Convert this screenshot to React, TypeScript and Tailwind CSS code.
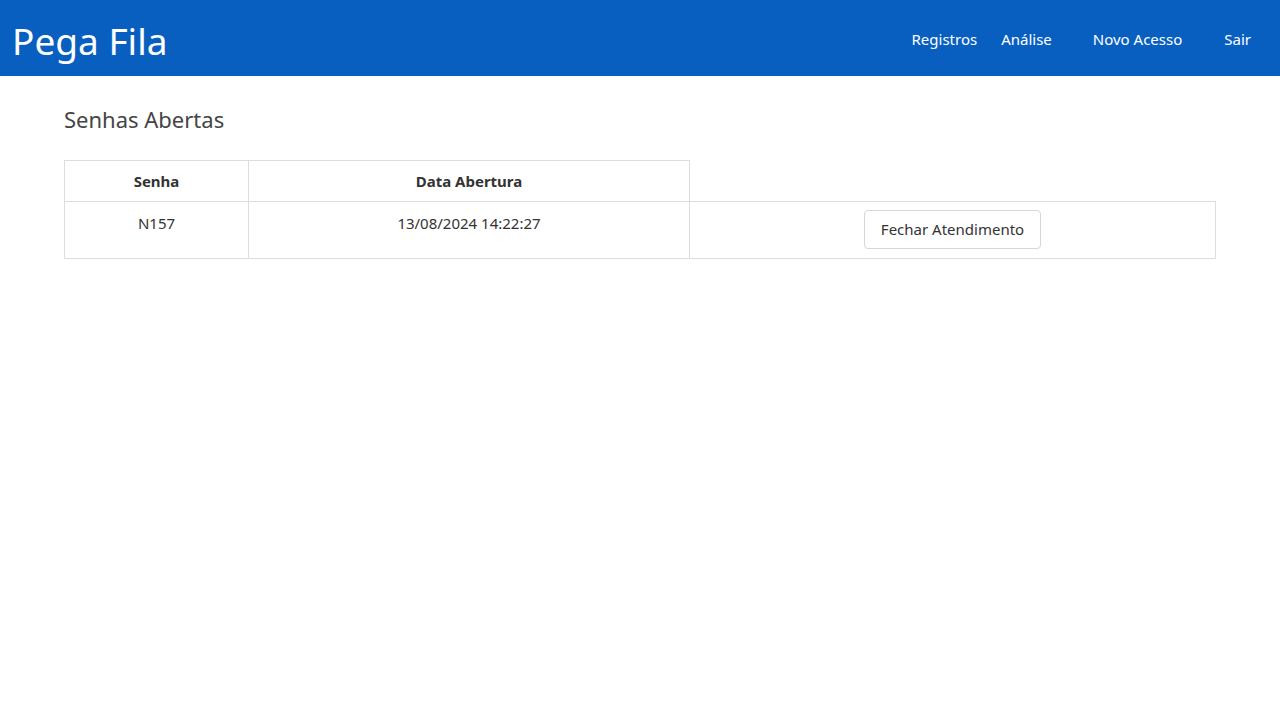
import React from 'react';

const navLinks = ['Registros', 'Análise', 'Novo Acesso', 'Sair'];

const rows = [{ senha: 'N157', abertura: '13/08/2024 14:22:27' }];

export default function App() {
  return (
    <div className="min-h-screen bg-white text-[#333] font-['Segoe_UI','Noto_Sans',sans-serif]">
      <header className="h-[76px] bg-[#095fbf] flex items-center justify-between pl-[12px] pr-[29px]">
        <h1 className="text-[37px] leading-none text-white pt-[4px]">Pega Fila</h1>
        <nav className="flex items-center text-white text-[15px] pt-[3px]">
          <a>{navLinks[0]}</a>
          <a className="ml-[24px]">{navLinks[1]}</a>
          <a className="ml-[41px]">{navLinks[2]}</a>
          <a className="ml-[42px]">{navLinks[3]}</a>
        </nav>
      </header>

      <main className="px-[64px]">
        <h2 className="mt-[27px] text-[22px] leading-[32px] text-[#444]">Senhas Abertas</h2>

        <table className="mt-[25px] w-full border-collapse text-[15px]">
          <thead>
            <tr>
              <th className="w-[184px] h-[41px] border border-[#ddd] font-bold text-center">Senha</th>
              <th className="w-[441px] border border-[#ddd] font-bold text-center">Data Abertura</th>
              <th className="border-b border-[#ddd]"></th>
            </tr>
          </thead>
          <tbody>
            {rows.map((r, i) => (
              <tr key={i}>
                <td className="h-[57px] border border-[#ddd] text-center align-top pt-[9px] leading-6">{r.senha}</td>
                <td className="border border-[#ddd] text-center align-top pt-[9px] leading-6">{r.abertura}</td>
                <td className="border border-[#ddd] text-center align-top pt-[8px]">
                  <button className="h-[39px] px-[16px] border border-[#d6d6d6] rounded-[4px] bg-white text-[#333]">
                    Fechar Atendimento
                  </button>
                </td>
              </tr>
            ))}
          </tbody>
        </table>
      </main>
    </div>
  );
}
